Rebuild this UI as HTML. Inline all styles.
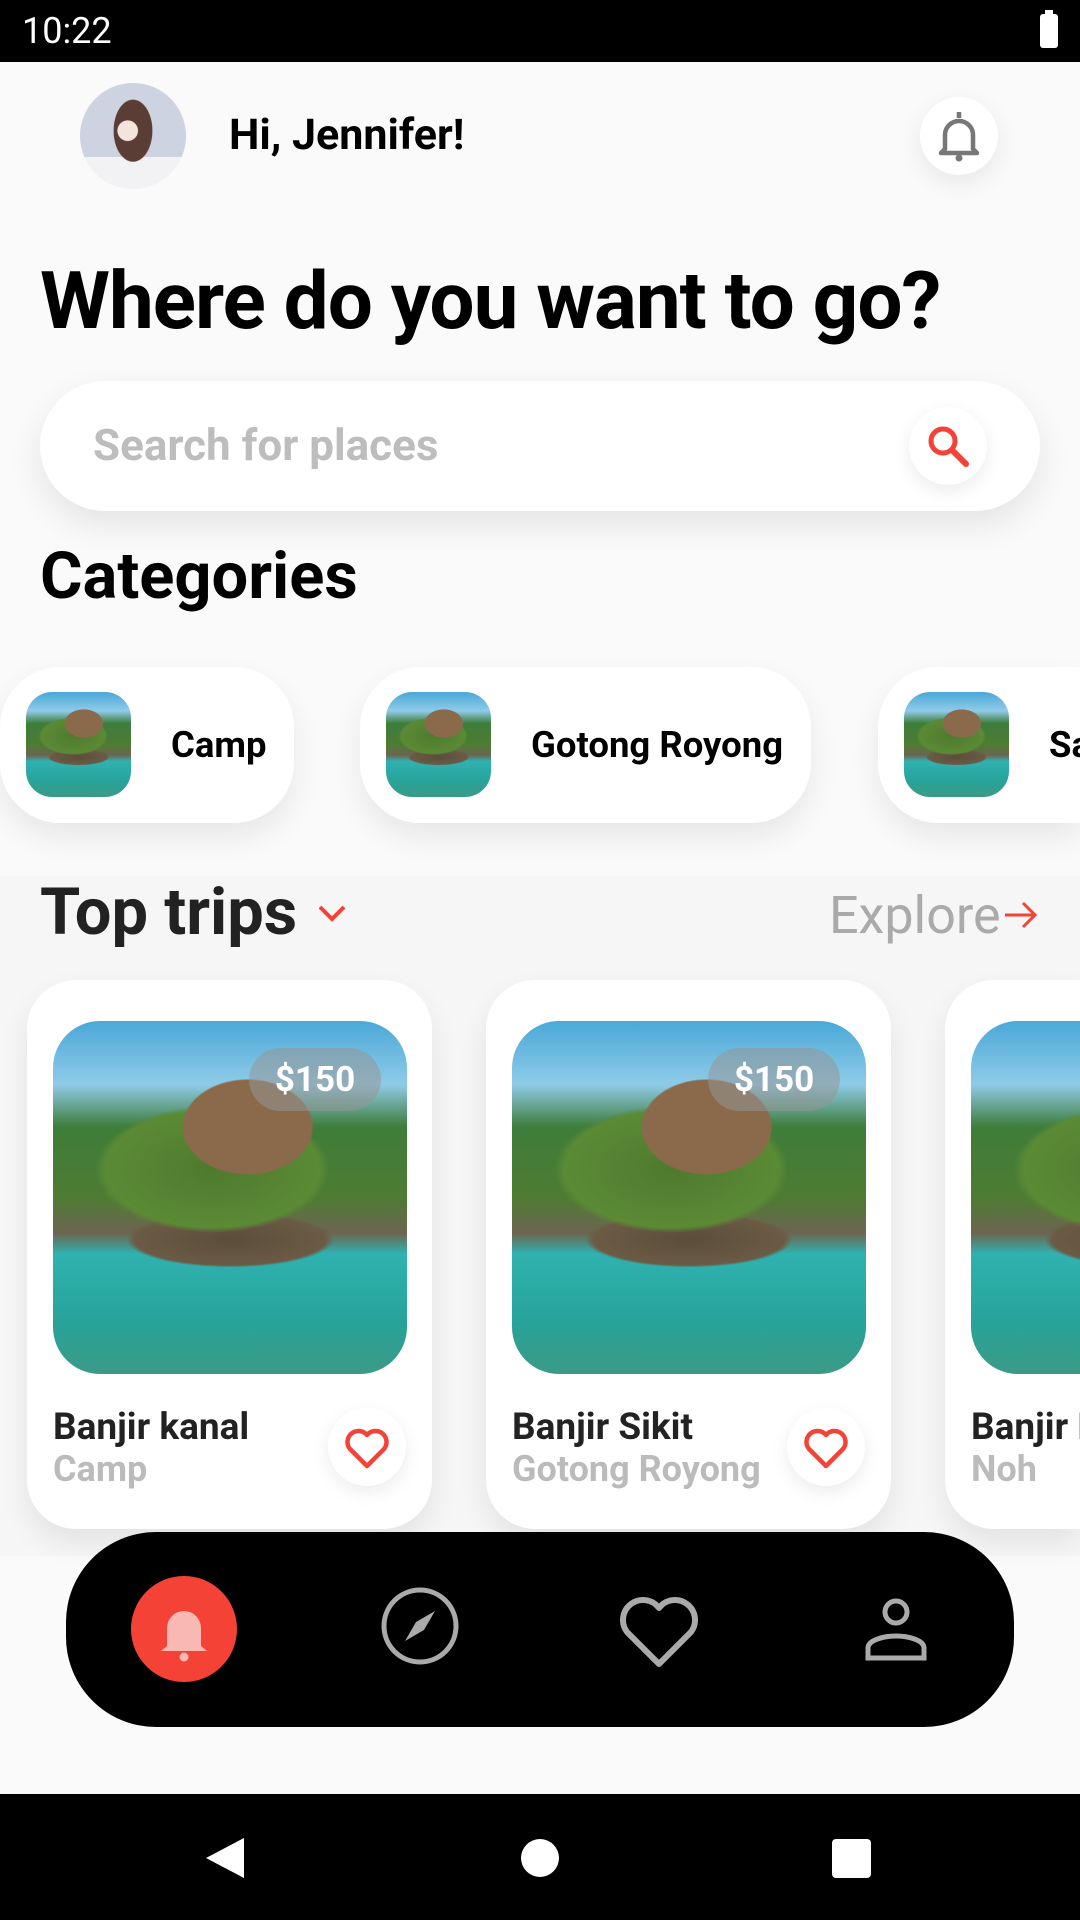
<!DOCTYPE html>
<html><head><meta charset="utf-8">
<style>
*{margin:0;padding:0;box-sizing:border-box}
html,body{overflow:hidden}
body{width:1080px;height:1920px;overflow:hidden;background:#fafafa;font-family:"Roboto","Liberation Sans",sans-serif;position:relative}
.abs{position:absolute}
.status{left:0;top:0;width:1080px;height:62px;background:#000;color:#fff;font-size:36px}
.pic{background:
 radial-gradient(ellipse 30% 22% at 55% 30%, #8a6a4a 0, #8a6a4a 60%, transparent 62%),
 radial-gradient(ellipse 55% 30% at 45% 42%, #4f7a2e 0, #5b8a35 55%, transparent 60%),
 radial-gradient(ellipse 45% 12% at 50% 62%, #5a4d3a 0, #6b5b45 60%, transparent 65%),
 linear-gradient(180deg,#4aa8d8 0%,#8fcbe8 18%,#3e7d3a 30%,#4e7c33 50%,#6d6450 60%,#2fb2b0 66%,#27a39a 85%,#3c9a86 100%);}
.chip{top:667px;height:156px;background:#fff;border-radius:60px;box-shadow:0 14px 30px rgba(0,0,0,.08);overflow:hidden}
.chip .pic{position:absolute;left:26px;top:25px;width:105px;height:105px;border-radius:26px}
.chip span{position:absolute;left:171px;top:56px;font-size:36.5px;font-weight:bold;color:#000;white-space:nowrap}
.card{top:980px;width:405px;height:549px;background:#fff;border-radius:49px;box-shadow:0 14px 30px rgba(0,0,0,.08);overflow:hidden}
.card .pic{position:absolute;left:26px;top:41px;width:354px;height:353px;border-radius:47px}
.price{position:absolute;left:222px;top:68px;width:132px;height:63px;border-radius:32px;background:rgba(150,150,150,.55);color:#fff;font-size:35px;font-weight:bold;text-align:center;line-height:63px}
.t1{position:absolute;left:26px;top:426px;font-size:37px;font-weight:bold;color:#222;white-space:nowrap}
.t2{position:absolute;left:26px;top:468px;font-size:36px;font-weight:bold;color:#bbb;white-space:nowrap}
.hb{position:absolute;left:301px;top:428px;width:78px;height:78px;border-radius:50%;background:#fff;box-shadow:0 6px 18px rgba(0,0,0,.08)}
</style></head><body>
<div class="abs status"><span class="abs" style="left:22px;top:10px">10:22</span>
<div class="abs" style="left:1040px;top:14px;width:18px;height:34px;background:#fff;border-radius:3px"></div><div class="abs" style="left:1045px;top:10px;width:8px;height:5px;background:#fff"></div></div>

<div class="abs" style="left:80px;top:83px;width:106px;height:106px;border-radius:50%;background:radial-gradient(circle at 45% 45%,#f3e4dc 0 12%,transparent 13%),radial-gradient(ellipse 30% 48% at 50% 45%,#5a3e36 0 60%,transparent 62%),linear-gradient(180deg,#cdd3e0 0 70%,#f2f2f4 70%);"></div>
<div class="abs" style="left:229px;top:110px;font-size:43px;font-weight:bold">Hi, Jennifer!</div>
<div class="abs" style="left:920px;top:97px;width:78px;height:78px;border-radius:50%;background:#fff;box-shadow:0 8px 24px rgba(0,0,0,.08)">
<svg width="78" height="78" viewBox="0 0 78 78"><path d="M39 15v6M25 52V38a14 14 0 0 1 28 0v14l4 4H21z" fill="none" stroke="#777" stroke-width="4.5" stroke-linejoin="round"/><circle cx="39" cy="61" r="3.5" fill="#777"/></svg></div>

<div class="abs" style="left:40px;top:254px;font-size:80px;font-weight:bold;letter-spacing:-1px;white-space:nowrap">Where do you want to go?</div>

<div class="abs" style="left:40px;top:381px;width:1000px;height:130px;border-radius:65px;background:#fff;box-shadow:0 14px 34px rgba(0,0,0,.09)"></div>
<div class="abs" style="left:93px;top:419px;font-size:44px;font-weight:bold;color:#bdbdbd">Search for places</div>
<div class="abs" style="left:909px;top:407px;width:78px;height:78px;border-radius:50%;background:#fff;box-shadow:0 6px 18px rgba(0,0,0,.08)">
<svg width="78" height="78" viewBox="0 0 78 78"><circle cx="34" cy="34" r="12" fill="none" stroke="#f44336" stroke-width="5"/><path d="M43 43l14 14" stroke="#f44336" stroke-width="6" stroke-linecap="round"/></svg></div>

<div class="abs" style="left:40px;top:538px;font-size:65px;font-weight:bold">Categories</div>

<div class="abs chip" style="left:0;width:294px"><div class="pic"></div><span>Camp</span></div>
<div class="abs chip" style="left:360px;width:451px"><div class="pic"></div><span>Gotong Royong</span></div>
<div class="abs chip" style="left:878px;width:202px;border-radius:60px 0 0 60px"><div class="pic"></div><span>Sa</span></div>

<div class="abs" style="left:0;top:876px;width:1080px;height:680px;background:#f6f6f6"></div>
<div class="abs" style="left:40px;top:874px;font-size:65px;font-weight:bold;color:#222">Top trips</div>
<svg class="abs" style="left:316px;top:902px" width="32" height="22" viewBox="0 0 32 22"><path d="M4 5l12 12 12-12" fill="none" stroke="#f44336" stroke-width="4"/></svg>
<div class="abs" style="left:829px;top:885px;font-size:52px;color:#aaa">Explore</div>
<svg class="abs" style="left:1003px;top:900px" width="36" height="30" viewBox="0 0 36 30"><path d="M2 15h30M20 3l12 12-12 12" fill="none" stroke="#f44336" stroke-width="3"/></svg>

<div class="abs card" style="left:27px"><div class="pic"></div><div class="price">$150</div><div class="t1">Banjir kanal</div><div class="t2">Camp</div>
<div class="hb"><svg width="78" height="78" viewBox="0 0 78 78"><path d="M39 58L22 41a10 10 0 0 1 17-14 10 10 0 0 1 17 14z" fill="none" stroke="#f44336" stroke-width="4.5" stroke-linejoin="round"/></svg></div></div>
<div class="abs card" style="left:486px"><div class="pic"></div><div class="price">$150</div><div class="t1">Banjir Sikit</div><div class="t2">Gotong Royong</div>
<div class="hb"><svg width="78" height="78" viewBox="0 0 78 78"><path d="M39 58L22 41a10 10 0 0 1 17-14 10 10 0 0 1 17 14z" fill="none" stroke="#f44336" stroke-width="4.5" stroke-linejoin="round"/></svg></div></div>
<div class="abs card" style="left:945px;width:135px;border-radius:49px 0 0 49px"><div class="pic"></div><div class="t1">Banjir Noh</div><div class="t2">Noh</div></div>

<div class="abs" style="left:66px;top:1532px;width:948px;height:195px;border-radius:90px;background:#000"></div>
<div class="abs" style="left:131px;top:1576px;width:106px;height:106px;border-radius:50%;background:#f44336">
<svg width="106" height="106" viewBox="0 0 106 106"><path d="M53 22v6M36 70V52a17 17 0 0 1 34 0v18l6 5H30z" fill="#f9b8b2"/><circle cx="53" cy="81" r="4.5" fill="#f9b8b2"/></svg></div>
<svg class="abs" style="left:380px;top:1586px" width="80" height="80" viewBox="0 0 80 80"><circle cx="40" cy="40" r="36" fill="none" stroke="#aaa" stroke-width="5"/><path d="M55 25L44 44 25 55 36 36z" fill="#aaa"/></svg>
<svg class="abs" style="left:617px;top:1590px" width="84" height="80" viewBox="0 0 84 80"><path d="M42 74L10 42a18 18 0 0 1 32-24 18 18 0 0 1 32 24z" fill="none" stroke="#aaa" stroke-width="6" stroke-linejoin="round"/></svg>
<svg class="abs" style="left:864px;top:1596px" width="64" height="66" viewBox="0 0 64 66"><circle cx="32" cy="16" r="11" fill="none" stroke="#aaa" stroke-width="5"/><path d="M4 62V52c0-8 16-12 28-12s28 4 28 12v10z" fill="none" stroke="#aaa" stroke-width="5"/></svg>

<div class="abs" style="left:0;top:1794px;width:1080px;height:126px;background:#000"></div>
<svg class="abs" style="left:200px;top:1834px" width="48" height="48" viewBox="0 0 48 48"><path d="M44 4v40L6 24z" fill="#fff"/></svg>
<div class="abs" style="left:521px;top:1839px;width:38px;height:38px;border-radius:50%;background:#fff"></div>
<div class="abs" style="left:832px;top:1839px;width:39px;height:39px;border-radius:4px;background:#fff"></div>
</body></html>
